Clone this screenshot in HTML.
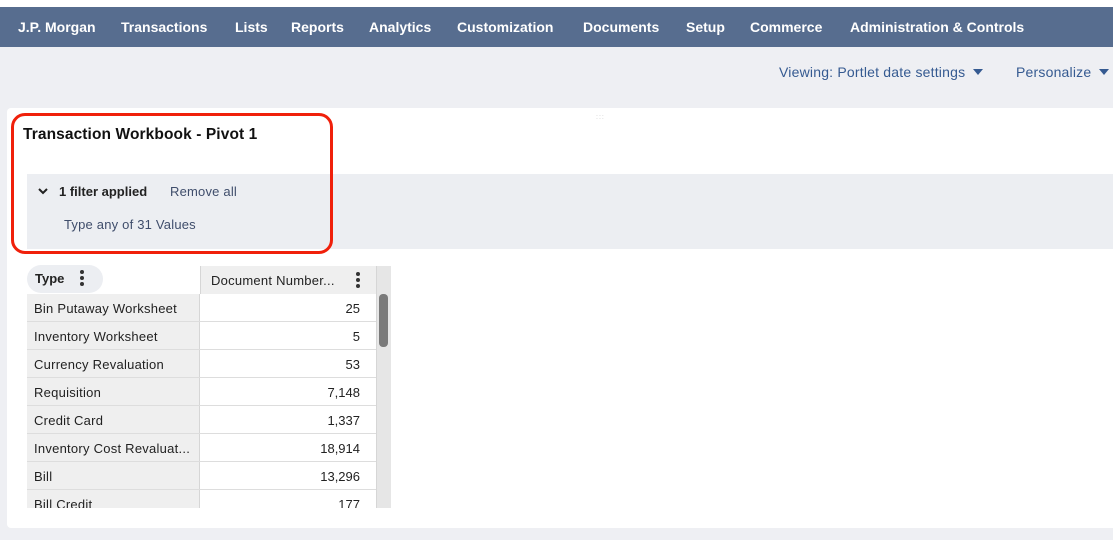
<!DOCTYPE html>
<html><head><style>
*{box-sizing:border-box;margin:0;padding:0}
body{width:1113px;height:540px;background:#eeeff3;font-family:"Liberation Sans",sans-serif;position:relative;overflow:hidden}
.top{position:absolute;left:0;top:0;width:1113px;height:7px;background:#fff}
.nav{position:absolute;left:0;top:7px;width:1113px;height:40px;background:#576d8f;color:#fff;font-weight:bold;font-size:14px}
.nav span{position:absolute;top:12px;white-space:nowrap}
.view{position:absolute;top:64px;color:#355a91;font-size:14px;white-space:nowrap;letter-spacing:0.2px}
.tri{display:inline-block;width:0;height:0;border-left:5px solid transparent;border-right:5px solid transparent;border-top:6px solid #355a91;margin-left:8px;vertical-align:2px}
.card{position:absolute;left:7px;top:108px;width:1110px;height:420px;background:#fff;border-radius:4px}
.title{position:absolute;left:23px;top:126px;font-size:15.5px;font-weight:bold;color:#111;letter-spacing:0.1px}
.band{position:absolute;left:27px;top:174px;width:1090px;height:75px;background:#eceef2}
.red{position:absolute;left:11px;top:113px;width:322px;height:141px;border:3px solid #f0200b;border-radius:14px}
.f1{position:absolute;left:59px;top:184px;font-size:13px;font-weight:bold;color:#222}
.f2{position:absolute;left:170px;top:184px;font-size:13px;color:#3f4d6b;letter-spacing:0.2px}
.f3{position:absolute;left:64px;top:217px;font-size:13px;color:#3f4d6b;letter-spacing:0.2px}
.chev{position:absolute;left:37px;top:186px}
.t{position:absolute;font-size:13px;color:#222;white-space:nowrap}
.row{position:absolute;left:27px;width:349px;height:28px;border-bottom:1px solid #ddd}
.row .a{position:absolute;left:0;top:0;width:173px;height:27px;background:#efefef;border-right:1px solid #d6d6d6;padding:7px 0 0 7px;font-size:13px;color:#222;letter-spacing:0.25px;white-space:nowrap}
.row .b{position:absolute;right:16px;top:7px;font-size:13px;color:#222}
.dots{position:absolute;width:4px}
.dots i{display:block;width:4px;height:4px;border-radius:2px;background:#333;margin-bottom:2px}
</style></head><body>
<div class="top"></div>
<div class="nav">
<span style="left:18px">J.P. Morgan</span><span style="left:121px">Transactions</span><span style="left:235px">Lists</span><span style="left:291px">Reports</span><span style="left:369px">Analytics</span><span style="left:457px">Customization</span><span style="left:583px">Documents</span><span style="left:686px">Setup</span><span style="left:750px">Commerce</span><span style="left:850px">Administration &amp; Controls</span>
</div>
<div class="view" style="left:779px">Viewing: Portlet date settings<span class="tri"></span></div>
<div class="view" style="left:1016px">Personalize<span class="tri"></span></div>
<div class="card"></div>
<div style="position:absolute;left:596px;top:114px;color:#ccc;font-size:7px;letter-spacing:1px">:::</div>
<div class="title">Transaction Workbook - Pivot 1</div>
<div class="band"></div>
<svg class="chev" width="12" height="10" viewBox="0 0 12 10"><path d="M2 3l4 4 4-4" stroke="#222" stroke-width="2" fill="none"/></svg>
<div class="f1">1 filter applied</div>
<div class="f2">Remove all</div>
<div class="f3">Type any of 31 Values</div>
<div class="red"></div>
<div style="position:absolute;left:27px;top:265px;width:76px;height:28px;background:#eceef2;border-radius:14px"></div>
<div class="t" style="left:35px;top:271px;font-weight:bold">Type</div>
<div class="dots" style="left:80px;top:270px"><i></i><i></i><i></i></div>
<div style="position:absolute;left:200px;top:266px;width:190px;height:28px;background:#efefef;border-left:1px solid #d6d6d6"></div>
<div style="position:absolute;left:376px;top:266px;width:15px;height:242px;background:#e6e6e6;border-left:1px solid #d6d6d6"></div>
<div style="position:absolute;left:379px;top:294px;width:9px;height:53px;background:#7a7a7a;border-radius:4px"></div>
<div class="t" style="left:211px;top:273px;letter-spacing:0.25px">Document Number...</div>
<div class="dots" style="left:356px;top:272px"><i></i><i></i><i></i></div>
<div style="position:absolute;left:27px;top:294px;width:349px;height:214px;overflow:hidden">
<div class="row" style="top:0;left:0"><div class="a">Bin Putaway Worksheet</div><div class="b">25</div></div>
<div class="row" style="top:28px;left:0"><div class="a">Inventory Worksheet</div><div class="b">5</div></div>
<div class="row" style="top:56px;left:0"><div class="a">Currency Revaluation</div><div class="b">53</div></div>
<div class="row" style="top:84px;left:0"><div class="a">Requisition</div><div class="b">7,148</div></div>
<div class="row" style="top:112px;left:0"><div class="a">Credit Card</div><div class="b">1,337</div></div>
<div class="row" style="top:140px;left:0"><div class="a">Inventory Cost Revaluat...</div><div class="b">18,914</div></div>
<div class="row" style="top:168px;left:0"><div class="a">Bill</div><div class="b">13,296</div></div>
<div class="row" style="top:196px;left:0"><div class="a">Bill Credit</div><div class="b">177</div></div>
</div>
</body></html>
